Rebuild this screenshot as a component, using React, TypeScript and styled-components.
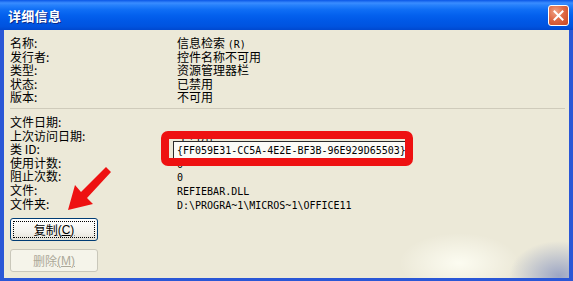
import React from 'react';
import styled, { createGlobalStyle } from 'styled-components';

const GlobalStyle = createGlobalStyle`
    html, body {
        margin: 0;
        padding: 0;
        background: #ece9d8;
    }
    body {
        font-family: "Noto Sans CJK SC", "Liberation Sans", sans-serif;
        font-size: 12px;
        color: #000;
    }
`;

const Window = styled.div`
    position: relative;
    width: 573px;
    height: 281px;
    display: flex;
    flex-direction: column;
    background: #2a57d6;
    overflow: hidden;
`;

const TitleBar = styled.div`
    height: 30px;
    flex: none;
    display: flex;
    align-items: center;
    justify-content: space-between;
    padding: 0 4px 0 8px;
    background: linear-gradient(
        to bottom,
        #0a56e6 0%,
        #3a8dff 10%,
        #2680fb 18%,
        #0f6ef5 32%,
        #0461ee 50%,
        #0058e6 70%,
        #0053df 88%,
        #0048cf 100%
    );
`;

const Title = styled.span`
    color: #fff;
    font-weight: 700;
    font-size: 13px;
    letter-spacing: 0.3px;
    text-shadow: 1px 1px 0 #0a2a8a;
`;

const CloseButton = styled.div`
    width: 19px;
    height: 19px;
    border: 1px solid #fff;
    border-radius: 3px;
    background: radial-gradient(circle at 35% 30%, #f0a285 0%, #df6a46 45%, #c94520 100%);
    display: flex;
    align-items: center;
    justify-content: center;
`;

const Body = styled.div`
    position: relative;
    flex: 1;
    margin: 0 4px 3px 4px;
    padding: 6px 0 0 6px;
    background: #ece9d8;
    overflow: hidden;
`;

const InfoGrid = styled.div`
    display: grid;
    grid-template-columns: 167px 1fr;
    grid-auto-rows: 13.6px;
    line-height: 13.6px;
    white-space: nowrap;
`;

const Label = styled.div``;

const Value = styled.div``;

const Mono = styled.span`
    font-family: "DejaVu Sans Mono", "Liberation Mono", monospace;
    font-size: 10px;
`;

const Separator = styled.div`
    height: 0;
    border-top: 1px solid #cfcbbb;
    margin: 4px 4px 6px 0;
`;

const Field = styled.span`
    display: inline-block;
    margin: -1px 0 -1px -4px;
    padding: 0 3px;
    border: 1px solid #2b2b2b;
    border-right-color: #d8d6cc;
    border-bottom-color: #d8d6cc;
    background: #fbfbf7;
`;

const Buttons = styled.div`
    display: flex;
    flex-direction: column;
    gap: 8px;
    margin-top: 8px;
`;

const Button = styled.div<{ disabled?: boolean; focused?: boolean }>`
    position: relative;
    width: 86px;
    height: 21px;
    border: 1px solid ${({ disabled }) => (disabled ? '#c9c7ba' : '#003c74')};
    border-radius: 3px;
    background: ${({ disabled }) =>
        disabled ? '#f5f4ea' : 'linear-gradient(to bottom, #ffffff 0%, #f4f3ee 60%, #e3e1d8 100%)'};
    color: ${({ disabled }) => (disabled ? '#aca899' : '#000')};
    display: flex;
    align-items: center;
    justify-content: center;
    font-size: 12px;

    &::after {
        content: '';
        display: ${({ focused }) => (focused ? 'block' : 'none')};
        position: absolute;
        inset: 2px;
        border: 1px dotted #000;
    }
`;

const Key = styled.u`
    font-family: "Liberation Sans", sans-serif;
`;

const Highlight = styled.div`
    position: absolute;
    left: 157px;
    top: 101px;
    width: 236px;
    height: 19px;
    border: 8px solid #ee1111;
    border-radius: 7px;
    pointer-events: none;
`;

const Arrow = styled.svg`
    position: absolute;
    left: 56px;
    top: 131px;
    width: 60px;
    height: 60px;
    overflow: visible;
`;

const Smudge = styled.div`
    position: absolute;
    right: 0;
    bottom: 0;
    width: 200px;
    height: 90px;
    pointer-events: none;
    background:
        radial-gradient(ellipse 60px 30px at 90px 75px, rgba(255, 255, 245, 0.85), rgba(255, 255, 245, 0) 100%),
        radial-gradient(ellipse 50px 35px at 190px 88px, rgba(90, 110, 180, 0.55), rgba(90, 110, 180, 0) 100%);
`;

const rows1: [string, React.ReactNode][] = [
    ['名称:', <>信息检索 <Mono>(R)</Mono></>],
    ['发行者:', '控件名称不可用'],
    ['类型:', '资源管理器栏'],
    ['状态:', '已禁用'],
    ['版本:', '不可用'],
];

const rows2: [string, React.ReactNode][] = [
    ['文件日期:', ''],
    ['上次访问日期:', '不可用'],
    ['类 ID:', <Field><Mono>{'{FF059E31-CC5A-4E2E-BF3B-96E929D65503}'}</Mono></Field>],
    ['使用计数:', <Mono>0</Mono>],
    ['阻止次数:', <Mono>0</Mono>],
    ['文件:', <Mono>REFIEBAR.DLL</Mono>],
    ['文件夹:', <Mono>{'D:\\PROGRA~1\\MICROS~1\\OFFICE11'}</Mono>],
];

const renderRows = (rows: [string, React.ReactNode][]) =>
    rows.map(([label, value]) => (
        <React.Fragment key={label}>
            <Label>{label}</Label>
            <Value>{value}</Value>
        </React.Fragment>
    ));

export default function App() {
    return (
        <>
            <GlobalStyle />
            <Window>
                <TitleBar>
                    <Title>详细信息</Title>
                    <CloseButton>
                        <svg width="11" height="11" viewBox="0 0 11 11">
                            <path d="M1.5 1.5 L9.5 9.5 M9.5 1.5 L1.5 9.5" stroke="#fff" strokeWidth="2" strokeLinecap="square" />
                        </svg>
                    </CloseButton>
                </TitleBar>
                <Body>
                    <InfoGrid>{renderRows(rows1)}</InfoGrid>
                    <Separator />
                    <InfoGrid>{renderRows(rows2)}</InfoGrid>
                    <Buttons>
                        <Button focused>
                            复制<Key>(<u>C</u>)</Key>
                        </Button>
                        <Button disabled>
                            删除<Key>(<u>M</u>)</Key>
                        </Button>
                    </Buttons>
                    <Highlight />
                    <Arrow viewBox="0 0 60 60">
                        <polygon
                            points="46,6 51,11 27,37 33,43 8,49 15,24 21,31"
                            fill="#ee1111"
                        />
                    </Arrow>
                    <Smudge />
                </Body>
            </Window>
        </>
    );
}
